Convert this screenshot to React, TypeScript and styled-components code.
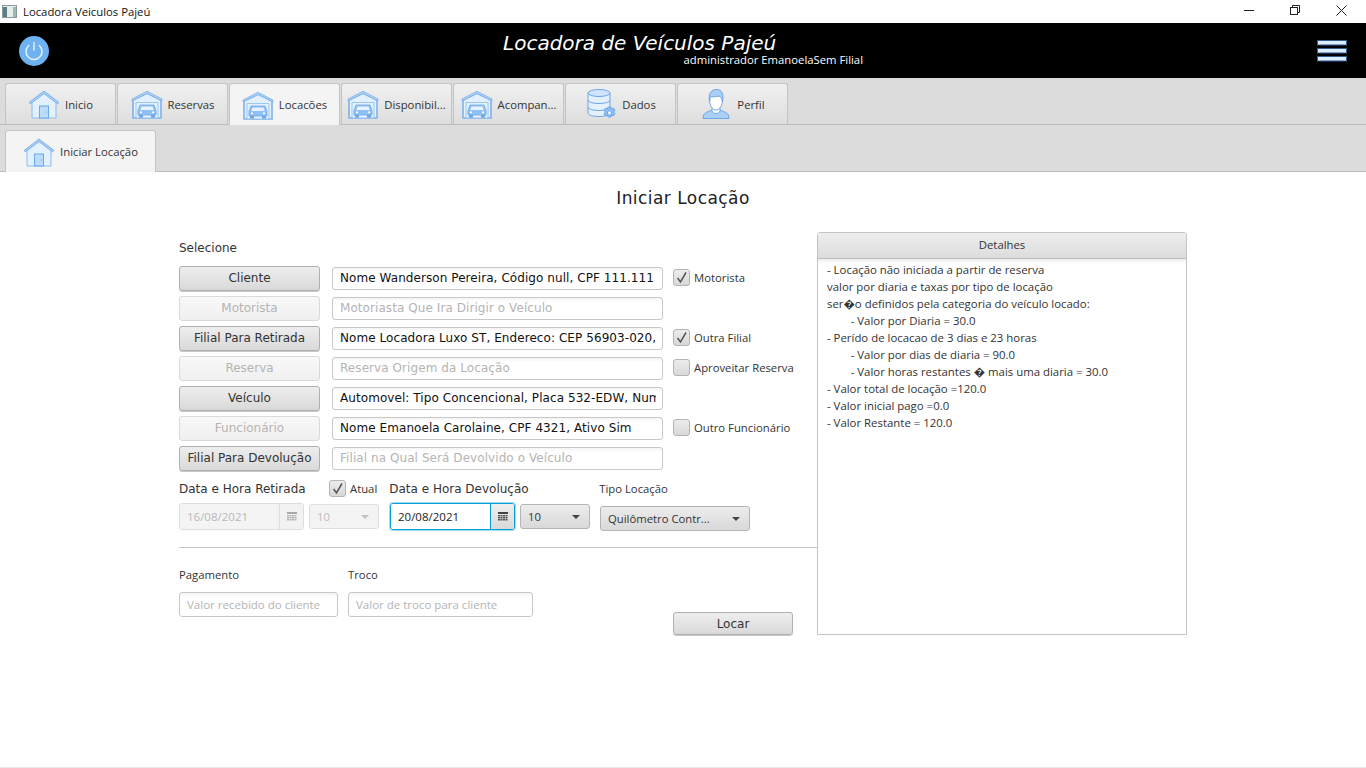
import React from "react";
import styled, { createGlobalStyle, css } from "styled-components";

const GlobalStyle = createGlobalStyle`
  html, body {
    margin: 0;
    padding: 0;
    background: #fff;
    overflow: hidden;
  }
  * {
    box-sizing: border-box;
  }
`;

const SEGOE = `"Open Sans", "Noto Sans", sans-serif`;
const VERDANA = `"DejaVu Sans", Verdana, sans-serif`;

const Page = styled.div`
  width: 1366px;
  height: 768px;
  display: flex;
  flex-direction: column;
  background: #fff;
  font-family: ${SEGOE};
  color: #333;
  border-bottom: 1px solid #e8e8e8;
`;

const TitleBar = styled.div`
  height: 23px;
  display: flex;
  align-items: center;
  padding: 0 2px;
  font-size: 11.3px;
  color: #111;
  background: #fff;
`;

const TitleText = styled.span`
  margin-left: 6px;
`;

const WindowButtons = styled.div`
  margin-left: auto;
  display: flex;
  align-self: flex-start;
`;

const WindowButton = styled.div`
  width: 46px;
  height: 20px;
  display: flex;
  align-items: center;
  justify-content: center;
`;

const Header = styled.header`
  height: 55px;
  background: #000;
  display: flex;
  align-items: center;
  padding: 0 19px;
`;

const HeaderText = styled.div`
  width: 360px;
  margin: 0 0 3px 454px;
  display: flex;
  flex-direction: column;
  color: #fff;
`;

const AppTitle = styled.div`
  font-family: ${VERDANA};
  font-style: italic;
  font-size: 20px;
  line-height: 20px;
  height: 20px;
  overflow: visible;
  white-space: nowrap;
`;

const UserLine = styled.div`
  font-size: 11.3px;
  line-height: 13px;
  text-align: right;
  white-space: nowrap;
`;

const HeaderRight = styled.div`
  margin-left: auto;
  display: flex;
`;

const TabBar = styled.div`
  height: 47px;
  padding: 5px 0 0 5px;
  background: #dcdcdc;
  border-bottom: 1px solid #bdbdbd;
  display: flex;
  gap: 1px;
`;

const Tab = styled.div<{ $active?: boolean; $width: number }>`
  width: ${(p) => p.$width}px;
  display: flex;
  align-items: center;
  justify-content: center;
  gap: 5px;
  font-size: 11.3px;
  color: #333;
  border: 1px solid #c4c4c4;
  border-bottom: none;
  border-radius: 3px 3px 0 0;
  white-space: nowrap;
  background: ${(p) =>
    p.$active ? "#f4f4f4" : "linear-gradient(#f0f0f0, #dedede)"};
  ${(p) =>
    p.$active &&
    css`
      margin-bottom: -1px;
    `}
`;

const Content = styled.main`
  flex: 1;
  display: flex;
  flex-direction: column;
  min-height: 0;
`;

const PageTitle = styled.h1`
  margin: 15px 0 0;
  height: 22px;
  line-height: 22px;
  text-align: center;
  font-family: ${VERDANA};
  font-weight: 400;
  font-size: 17px;
  letter-spacing: 0.45px;
  color: #222;
`;

const Columns = styled.div`
  display: flex;
  margin: 23px 0 0 179px;
`;

const Form = styled.section`
  width: 638px;
  display: flex;
  flex-direction: column;
`;

const SelectLabel = styled.div`
  font-family: ${VERDANA};
  font-size: 12px;
  line-height: 14px;
  margin-top: 9px;
  color: #333;
`;

const Rows = styled.div`
  display: flex;
  flex-direction: column;
  gap: 4px;
  margin-top: 10px;
`;

const Row = styled.div`
  height: 26px;
  display: flex;
  align-items: center;
`;

const Button = styled.button<{ $width?: number; $height?: number; $off?: boolean }>`
  width: ${(p) => p.$width ?? 141}px;
  height: ${(p) => p.$height ?? 25}px;
  padding: 0;
  border: 1px solid ${(p) => (p.$off ? "#dadada" : "#b0b0b0")};
  border-radius: 3px;
  font-family: ${VERDANA};
  font-size: 12px;
  color: ${(p) => (p.$off ? "#b4b4b4" : "#333")};
  background: ${(p) =>
    p.$off ? "linear-gradient(#f8f8f8, #f0f0f0)" : "linear-gradient(#eeeeee, #d9d9d9)"};
  box-shadow: ${(p) => (p.$off ? "none" : "0 1px 0 #c8c8c8")};
`;

const TextField = styled.input<{ $width?: number; $small?: boolean }>`
  width: ${(p) => p.$width ?? 331}px;
  height: ${(p) => (p.$small ? 25 : 23)}px;
  padding: 0 6px 0 7px;
  border: 1px solid #c8c8c8;
  border-radius: 3px;
  outline: none;
  font-family: ${(p) => (p.$small ? SEGOE : VERDANA)};
  font-size: ${(p) => (p.$small ? 11.5 : 12)}px;
  letter-spacing: ${(p) => (p.$small ? 0 : 0.07)}px;
  color: #111;
  background: linear-gradient(#f4f4f4, #fff 4px);
  &::placeholder {
    color: #b4b4b4;
    opacity: 1;
  }
`;

const RowField = styled(TextField)`
  margin-left: 12px;
`;

const CheckWrap = styled.div`
  display: flex;
  align-items: center;
  gap: 4px;
  font-size: 11.3px;
  line-height: 15px;
  color: #333;
  white-space: nowrap;
`;

const RowCheck = styled.div`
  margin: -1px 0 0 10px;
`;

const CheckBox = styled.span`
  width: 17px;
  height: 17px;
  display: inline-flex;
  align-items: center;
  justify-content: center;
  border: 1px solid #b4b4b4;
  border-radius: 3px;
  background: linear-gradient(#ececec, #d8d8d8);
`;

const DateLabels = styled.div`
  display: flex;
  align-items: center;
  height: 17px;
  margin-top: 9px;
`;

const DateLabel = styled.span<{ $width: number; $left?: number }>`
  width: ${(p) => p.$width}px;
  margin-left: ${(p) => p.$left ?? 0}px;
  font-family: ${VERDANA};
  font-size: 12px;
  color: #333;
  white-space: nowrap;
`;

const TypeLabel = styled.span`
  font-size: 11.3px;
  color: #333;
`;

const DateRow = styled.div`
  display: flex;
  align-items: flex-start;
  margin-top: 6px;
  height: 28px;
`;

const DatePicker = styled.div<{ $off?: boolean; $focus?: boolean; $left?: number }>`
  width: 125px;
  height: 27px;
  margin-left: ${(p) => p.$left ?? 0}px;
  display: flex;
  border: 1px solid ${(p) => (p.$focus ? "#039ed3" : p.$off ? "#dddddd" : "#b8b8b8")};
  border-radius: 3px;
  overflow: hidden;
  ${(p) =>
    p.$focus &&
    css`
      box-shadow: 0 0 0 1px #a6dcef;
    `}
`;

const DateValue = styled.div<{ $off?: boolean }>`
  flex: 1;
  padding-left: 7px;
  line-height: 25px;
  font-size: 11.5px;
  color: ${(p) => (p.$off ? "#b8b8b8" : "#222")};
  background: ${(p) => (p.$off ? "#f4f4f4" : "#fff")};
`;

const DateButton = styled.div<{ $off?: boolean; $focus?: boolean }>`
  width: 24px;
  display: flex;
  align-items: center;
  justify-content: center;
  border-left: 1px solid ${(p) => (p.$focus ? "#039ed3" : p.$off ? "#dddddd" : "#b8b8b8")};
  background: ${(p) => (p.$off ? "#f2f2f2" : "linear-gradient(#eeeeee, #d9d9d9)")};
`;

const Combo = styled.div<{ $width: number; $off?: boolean; $gap: number; $down?: number }>`
  width: ${(p) => p.$width}px;
  height: 25px;
  margin-left: ${(p) => p.$gap}px;
  margin-top: ${(p) => p.$down ?? 1}px;
  display: flex;
  align-items: center;
  justify-content: space-between;
  padding: 0 9px 0 7px;
  border: 1px solid ${(p) => (p.$off ? "#e0e0e0" : "#b4b4b4")};
  border-radius: 3px;
  font-size: 11.3px;
  color: ${(p) => (p.$off ? "#bdbdbd" : "#333")};
  background: ${(p) => (p.$off ? "#f3f3f3" : "linear-gradient(#ececec, #d9d9d9)")};
  white-space: nowrap;
`;

const Arrow = styled.span<{ $off?: boolean }>`
  width: 0;
  height: 0;
  border-left: 4px solid transparent;
  border-right: 4px solid transparent;
  border-top: 4px solid ${(p) => (p.$off ? "#c0c0c0" : "#444")};
`;

const Divider = styled.hr`
  width: 100%;
  height: 1px;
  margin: 16px 0 0;
  border: none;
  background: #c8c8c8;
`;

const PayGrid = styled.div`
  display: grid;
  grid-template-columns: 159px 185px 1fr;
  column-gap: 10px;
  margin-top: 20px;
`;

const PayLabel = styled.div`
  font-size: 11.3px;
  line-height: 14px;
  margin-bottom: 10px;
  color: #333;
`;

const LocarCell = styled.div`
  display: flex;
  align-items: flex-end;
  justify-content: flex-end;
  padding-right: 24px;
  margin-bottom: -18px;
`;

const DetailsPanel = styled.aside`
  width: 370px;
  height: 403px;
  border: 1px solid #c4c4c4;
  border-radius: 3px 3px 0 0;
  display: flex;
  flex-direction: column;
`;

const DetailsHead = styled.div`
  height: 26px;
  line-height: 23px;
  text-align: center;
  font-size: 11.3px;
  color: #333;
  background: linear-gradient(#eeeeee, #dcdcdc);
  border-bottom: 1px solid #bdbdbd;
`;

const DetailsBody = styled.div`
  flex: 1;
  padding: 2px 9px;
  font-size: 11.4px;
  line-height: 17px;
  color: #333;
  background: linear-gradient(#ececec, #fff 5px);
  white-space: pre;
`;

const HouseIcon = () => (
  <svg width="32" height="32" viewBox="0 0 32 32" fill="none">
    <path d="M4 14v16h24V14L16 5z" fill="#e3f1ff" stroke="#8cbcf0" strokeWidth="1" />
    <path d="M1 14.500 16 3l15 11.500-1.400 1.400L16 5.600 2.400 15.900z" fill="#a9cff5" stroke="#6ea6e6" strokeWidth="0.8" />
    <rect x="11.500" y="18" width="9" height="12" fill="#bcdcfb" stroke="#6ea6e6" strokeWidth="1" />
    <circle cx="18.300" cy="24" r="0.6" fill="#5f95d6" />
  </svg>
);

const GarageIcon = () => (
  <svg width="32" height="32" viewBox="0 0 32 32" fill="none">
    <path d="M2 12v18h28V12L16 5z" fill="#e3f1ff" stroke="#7fb2ea" strokeWidth="1.600" />
    <path d="M1 11 16 3.200 31 11v2L16 5.600 1 13z" fill="#a9cff5" stroke="#6ea6e6" strokeWidth="0.6" />
    <path d="M5 14.500h22V30H5z" fill="#e3f1ff" stroke="#8cbcf0" strokeWidth="0.8" />
    <path d="M9 17h14l2 5.500V27H7v-4.500z" fill="#8fc0f3" stroke="#6ea6e6" strokeWidth="0.8" />
    <path d="M10.500 18.500h11l1.200 3.500H9.300z" fill="#e8f3ff" />
    <rect x="8" y="27" width="4" height="2.600" fill="#6ea6e6" />
    <rect x="20" y="27" width="4" height="2.600" fill="#6ea6e6" />
    <circle cx="10" cy="24.300" r="1.100" fill="#fff" />
    <circle cx="22" cy="24.300" r="1.100" fill="#fff" />
  </svg>
);

const DatabaseIcon = () => (
  <svg width="32" height="32" viewBox="0 0 32 32" fill="none" stroke="#6ea6e6" strokeWidth="1">
    <path d="M3 5v20c0 2 5 3.500 11 3.500S25 27 25 25V5" fill="#e3f1ff" />
    <ellipse cx="14" cy="5" rx="11" ry="3.500" fill="#cfe5fd" />
    <path d="M3 12c0 2 5 3.500 11 3.500S25 14 25 12M3 19c0 2 5 3.500 11 3.500S25 21 25 19" />
    <path
      d="M23 19h3l.5 2 2-.8 1.500 2.200-1.500 1.600 1.500 1.600-1.500 2.200-2-.8-.5 2h-3l-.5-2-2 .8-1.500-2.200 1.500-1.600-1.500-1.600 1.500-2.200 2 .8z"
      fill="#8fc0f3"
    />
    <circle cx="24.500" cy="25" r="2.200" fill="#e3f1ff" />
  </svg>
);

const PersonIcon = () => (
  <svg width="32" height="32" viewBox="0 0 32 32" fill="none" stroke="#6ea6e6" strokeWidth="1">
    <path d="M3 30.500c0-4 2-6 5.500-7l3.500-1.500h8l3.500 1.500c3.500 1 5.500 3 5.500 7z" fill="#a9cff5" />
    <path d="M12 20h8v3c0 1-2 2.500-4 2.500s-4-1.500-4-2.500z" fill="#fff" />
    <path d="M9.500 11c0-6 2.500-9 6.500-9s6.500 3 6.500 9c0 6-2.500 11-6.500 11s-6.500-5-6.500-11z" fill="#fff" />
    <path d="M9.500 14C8 6 11 1.500 16.500 1.500S24 6 22.500 14c-.5-3-1.500-5-3.500-6-3 1-6.500 1-8 .5-.8 1.200-1.200 3-1.500 5.500z" fill="#a9cff5" />
  </svg>
);

const PowerIcon = () => (
  <svg width="30" height="30" viewBox="0 0 30 30" fill="none">
    <circle cx="15" cy="15" r="15" fill="#6fb2f2" />
    <path d="M9.700 9.500a8 8 0 1 0 10.600 0" stroke="#e4f1fd" strokeWidth="1.500" strokeLinecap="round" />
    <path d="M15 6.500V14" stroke="#e4f1fd" strokeWidth="1.500" strokeLinecap="round" />
  </svg>
);

const MenuIcon = () => (
  <svg width="30" height="22" viewBox="0 0 30 22">
    {[0, 8, 16].map((y) => (
      <rect key={y} x="0.500" y={y + 0.5} width="29" height="4.500" fill="#dcedfd" stroke="#2f5f94" />
    ))}
  </svg>
);

const AppIcon = () => (
  <svg width="15" height="13" viewBox="0 0 15 13">
    <rect x="0.500" y="0.500" width="14" height="12" fill="#e8ecec" stroke="#8a9a9a" />
    <rect x="1" y="2" width="4" height="10" fill="#5a7f8a" />
    <rect x="5" y="2" width="6" height="10" fill="#e6efe6" />
    <rect x="11" y="2" width="3" height="10" fill="#9fb7b9" />
  </svg>
);

const CalendarIcon = ({ off }: { off?: boolean }) => (
  <svg width="10" height="9" viewBox="0 0 10 9">
    <rect width="10" height="2" fill={off ? "#a8a8a8" : "#444"} />
    {[3, 5, 7].map((y) =>
      [0, 2.5, 5, 7.5].map((x) => (
        <rect key={`${x}-${y}`} x={x} y={y} width="2" height="1.500" fill={off ? "#b4b4b4" : "#555"} />
      ))
    )}
  </svg>
);

const Tick = () => (
  <svg width="13" height="13" viewBox="0 0 13 13" fill="none">
    <path d="M2.500 7 5.500 11 11 1.500" stroke="#555" strokeWidth="1.500" />
  </svg>
);

const Check = ({ checked, label }: { checked?: boolean; label: string }) => (
  <CheckWrap>
    <CheckBox>{checked && <Tick />}</CheckBox>
    {label}
  </CheckWrap>
);

const mainTabs = [
  { label: "Inicio", icon: <HouseIcon /> },
  { label: "Reservas", icon: <GarageIcon /> },
  { label: "Locacões", icon: <GarageIcon />, active: true },
  { label: "Disponibil...", icon: <GarageIcon /> },
  { label: "Acompan...", icon: <GarageIcon /> },
  { label: "Dados", icon: <DatabaseIcon /> },
  { label: "Perfil", icon: <PersonIcon /> },
];

const formRows = [
  { button: "Cliente", value: "Nome Wanderson Pereira, Código null, CPF 111.111", check: "Motorista", checked: true },
  { button: "Motorista", off: true, placeholder: "Motoriasta Que Ira Dirigir o Veículo" },
  { button: "Filial Para Retirada", value: "Nome Locadora Luxo ST, Endereco: CEP 56903-020, Serra Talhada", check: "Outra Filial", checked: true },
  { button: "Reserva", off: true, placeholder: "Reserva Origem da Locação", check: "Aproveitar Reserva" },
  { button: "Veículo", value: "Automovel: Tipo Concencional, Placa 532-EDW, Numero de Chassi" },
  { button: "Funcionário", off: true, value: "Nome Emanoela Carolaine, CPF 4321, Ativo Sim", check: "Outro Funcionário" },
  { button: "Filial Para Devolução", placeholder: "Filial na Qual Será Devolvido o Veículo" },
];

const details = `- Locação não iniciada a partir de reserva
valor por diaria e taxas por tipo de locação
ser\uFFFDo definidos pela categoria do veículo locado:
        - Valor por Diaria = 30.0
- Perído de locacao de 3 dias e 23 horas
        - Valor por dias de diaria = 90.0
        - Valor horas restantes \uFFFD mais uma diaria = 30.0
- Valor total de locação =120.0
- Valor inicial pago =0.0
- Valor Restante = 120.0`;

export default function App() {
  return (
    <Page>
      <GlobalStyle />
      <TitleBar>
        <AppIcon />
        <TitleText>Locadora Veiculos Pajeú</TitleText>
        <WindowButtons>
          <WindowButton>
            <svg width="10" height="10" viewBox="0 0 10 10">
              <path d="M0 5.500h10" stroke="#222" />
            </svg>
          </WindowButton>
          <WindowButton>
            <svg width="10" height="10" viewBox="0 0 10 10" fill="none" stroke="#222">
              <rect x="0.500" y="2.500" width="7" height="7" />
              <path d="M2.500 2.500v-2h7v7h-2" />
            </svg>
          </WindowButton>
          <WindowButton>
            <svg width="11" height="11" viewBox="0 0 11 11" stroke="#222">
              <path d="M0.500 0.500l10 10M10.500 0.500l-10 10" />
            </svg>
          </WindowButton>
        </WindowButtons>
      </TitleBar>

      <Header>
        <PowerIcon />
        <HeaderText>
          <AppTitle>Locadora de Veículos Pajeú</AppTitle>
          <UserLine>administrador EmanoelaSem Filial</UserLine>
        </HeaderText>
        <HeaderRight>
          <MenuIcon />
        </HeaderRight>
      </Header>

      <TabBar>
        {mainTabs.map((t) => (
          <Tab key={t.label} $width={111} $active={t.active}>
            {t.icon}
            {t.label}
          </Tab>
        ))}
      </TabBar>
      <TabBar>
        <Tab $width={151} $active>
          <HouseIcon />
          Iniciar Locação
        </Tab>
      </TabBar>

      <Content>
        <PageTitle>Iniciar Locação</PageTitle>
        <Columns>
          <Form>
            <SelectLabel>Selecione</SelectLabel>
            <Rows>
              {formRows.map((r) => (
                <Row key={r.button}>
                  <Button $off={r.off}>{r.button}</Button>
                  <RowField readOnly value={r.value} placeholder={r.placeholder} />
                  {r.check && (
                    <RowCheck>
                      <Check checked={r.checked} label={r.check} />
                    </RowCheck>
                  )}
                </Row>
              ))}
            </Rows>

            <DateLabels>
              <DateLabel $width={150}>Data e Hora Retirada</DateLabel>
              <Check checked label="Atual" />
              <DateLabel $width={210} $left={12}>
                Data e Hora Devolução
              </DateLabel>
              <TypeLabel>Tipo Locação</TypeLabel>
            </DateLabels>
            <DateRow>
              <DatePicker $off>
                <DateValue $off>16/08/2021</DateValue>
                <DateButton $off>
                  <CalendarIcon off />
                </DateButton>
              </DatePicker>
              <Combo $off $width={70} $gap={5}>
                10
                <Arrow $off />
              </Combo>
              <DatePicker $focus $left={11}>
                <DateValue>20/08/2021</DateValue>
                <DateButton $focus>
                  <CalendarIcon />
                </DateButton>
              </DatePicker>
              <Combo $width={70} $gap={5}>
                10
                <Arrow />
              </Combo>
              <Combo $width={150} $gap={10} $down={3}>
                Quilômetro Contr...
                <Arrow />
              </Combo>
            </DateRow>

            <Divider />

            <PayGrid>
              <PayLabel>Pagamento</PayLabel>
              <PayLabel>Troco</PayLabel>
              <span />
              <TextField $small $width={159} readOnly placeholder="Valor recebido do cliente" />
              <TextField $small $width={185} readOnly placeholder="Valor de troco para cliente" />
              <LocarCell>
                <Button $width={120} $height={23}>Locar</Button>
              </LocarCell>
            </PayGrid>
          </Form>

          <DetailsPanel>
            <DetailsHead>Detalhes</DetailsHead>
            <DetailsBody>{details}</DetailsBody>
          </DetailsPanel>
        </Columns>
      </Content>
    </Page>
  );
}
